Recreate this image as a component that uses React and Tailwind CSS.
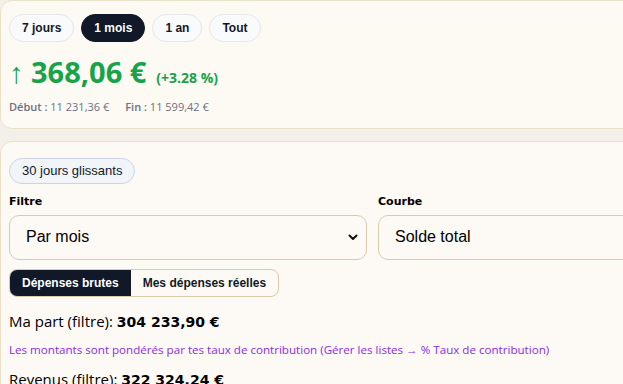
import { useState } from 'react';

const periods = ['7 jours', '1 mois', '1 an', 'Tout'];

export default function App() {
  const [period, setPeriod] = useState('1 mois');
  const [mode, setMode] = useState('brutes');

  return (
    <div className="w-screen h-screen overflow-hidden bg-[#f3efe9]">
      <div className="w-[745px]">
        {/* Carte variation */}
        <div className="bg-[#fdf9f3] border border-[#ebe1c9] rounded-[12px] h-[129px] px-2 pt-[13px] font-['Open_Sans',sans-serif]">
          <div className="flex gap-[7px]">
            {periods.map((p) => (
              <button
                key={p}
                onClick={() => setPeriod(p)}
                className={`h-[28px] px-3 rounded-full border text-[12px] font-bold font-['Liberation_Sans',Arial,sans-serif] ${
                  period === p
                    ? 'bg-[#111827] border-[#111827] text-white'
                    : 'bg-[#f9fafb] border-[#e5e7eb] text-[#111827]'
                }`}
              >
                {p}
              </button>
            ))}
          </div>
          <div className="mt-[12px] flex items-baseline text-[#16a34a]">
            <span className="text-[29px] font-bold leading-[36px]">↑ 368,06 €</span>
            <span className="ml-[10px] text-[14px] font-bold">(+3.28 %)</span>
          </div>
          <div className="mt-[9px] flex gap-4 text-[11px] text-[#6b7280]">
            <span><span className="font-semibold">Début :</span> 11 231,36 €</span>
            <span><span className="font-semibold">Fin :</span> 11 599,42 €</span>
          </div>
        </div>

        {/* Carte graphique */}
        <div className="mt-[12px] bg-[#fdfaf5] border border-[#ebe1c9] rounded-[12px] px-2 pt-[15px] pb-4 h-[400px]">
          <div className="inline-flex items-center h-[26px] px-3 rounded-full border border-[#cbd5e1] bg-[#f1f5f9] text-[13px] text-[#111827] font-['Liberation_Sans']">
            30 jours glissants
          </div>

          <div className="mt-[10px] grid grid-cols-2 gap-[11px]">
            <div>
              <div className="text-[11px] font-bold text-black font-['DejaVu_Sans',sans-serif] leading-[16px]">Filtre</div>
              <div className="mt-[5px] h-[45px] rounded-[10px] border border-[#d8cbab] bg-[#fdfaf5] flex items-center justify-between pl-4 pr-[7px] font-['Liberation_Sans',Arial,sans-serif] text-[16px] text-black">
                <span>Par mois</span>
                <svg width="12" height="12" viewBox="0 0 12 12" fill="none">
                  <path d="M2.5 4.5 L6 8 L9.5 4.5" stroke="#111" strokeWidth="2" strokeLinecap="round" strokeLinejoin="round" />
                </svg>
              </div>
            </div>
            <div>
              <div className="text-[11px] font-bold text-black font-['DejaVu_Sans',sans-serif] leading-[16px]">Courbe</div>
              <div className="mt-[5px] h-[45px] rounded-[10px] border border-[#d8cbab] bg-[#fdfaf5] flex items-center pl-4 font-['Liberation_Sans',Arial,sans-serif] text-[16px] text-black">
                <span>Solde total</span>
              </div>
            </div>
          </div>

          <div className="mt-[9px] inline-flex h-[28px] rounded-[8px] border border-[#d8cbab] overflow-hidden font-['Liberation_Sans',Arial,sans-serif] text-[12px] font-bold">
            <button
              onClick={() => setMode('brutes')}
              className={`px-3 ${mode === 'brutes' ? 'bg-[#111827] text-white' : 'text-[#111827]'}`}
            >
              Dépenses brutes
            </button>
            <button
              onClick={() => setMode('reelles')}
              className={`px-3 ${mode === 'reelles' ? 'bg-[#111827] text-white' : 'text-[#111827]'}`}
            >
              Mes dépenses réelles
            </button>
          </div>

          <div className="mt-[13px] text-[15px] text-black font-['Open_Sans',sans-serif] leading-[22px]">
            Ma part (filtre): <span className="font-bold font-['DejaVu_Sans',sans-serif] text-[14px]">304 233,90 €</span>
          </div>
          <div className="mt-[9px] text-[11.6px] text-[#8b2be2] font-['Open_Sans',sans-serif] leading-[16px]">
            Les montants sont pondérés par tes taux de contribution (Gérer les listes → % Taux de contribution)
          </div>
          <div className="mt-[10px] text-[15px] text-black font-['Open_Sans',sans-serif] leading-[22px]">
            Revenus (filtre): <span className="font-bold font-['DejaVu_Sans',sans-serif] text-[14px]">322 324,24 €</span>
          </div>
        </div>
      </div>
    </div>
  );
}
